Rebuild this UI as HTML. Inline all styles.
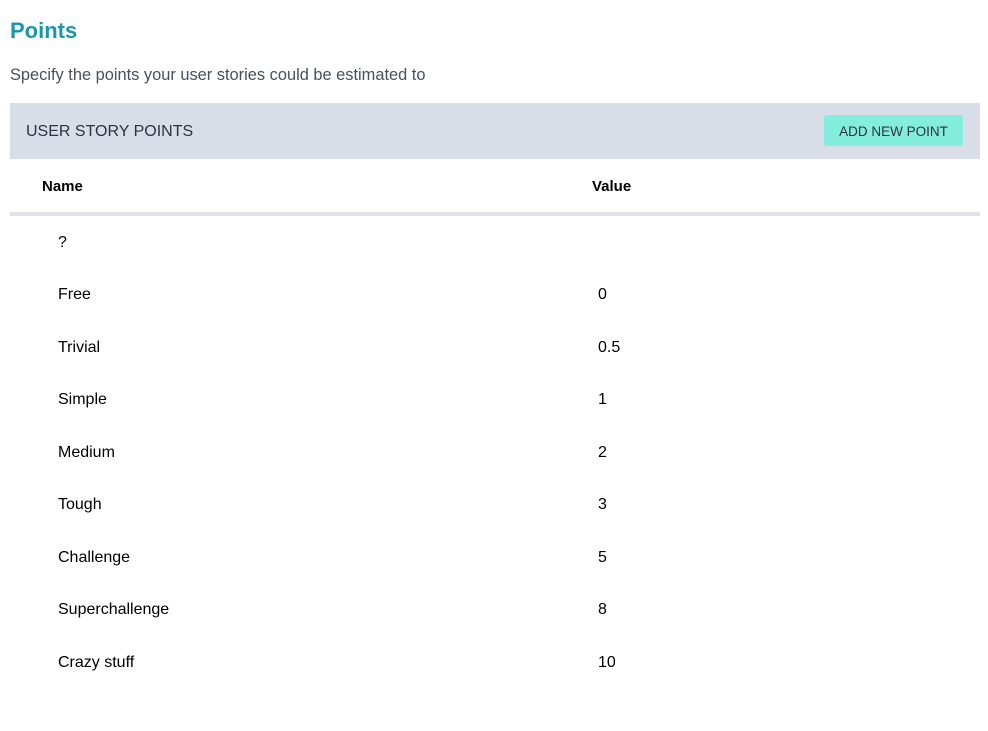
<!DOCTYPE html>
<html><head><meta charset="utf-8"><style>
body{margin:0;width:988px;height:731px;background:#fff;font-family:"Liberation Sans","DejaVu Sans",sans-serif;position:relative;overflow:hidden}
.a{position:absolute;white-space:nowrap;line-height:20px}
h1{position:absolute;left:10px;top:17px;margin:0;font-size:22px;font-weight:bold;color:#1a96ad;line-height:28px}
.sub{left:10px;top:65px;font-size:16.4px;color:#4a4f5e}
.bar{position:absolute;left:10px;top:103px;width:970px;height:56px;background:#d8dde8}
.bt{left:26px;top:122px;font-size:16px;color:#2d3140}
.btn{position:absolute;left:824px;top:115px;width:139px;height:31px;background:#83eedd;border-radius:3px;font-size:13.5px;color:#2d3140;text-align:center;line-height:34px}
.th{top:177px;font-size:15px;font-weight:bold;color:#000}
.div{position:absolute;left:10px;top:212px;width:970px;height:4px;background:#e1e2e7}
.r{font-size:16px;color:#000}
</style></head><body>
<h1>Points</h1>
<div class="a sub">Specify the points your user stories could be estimated to</div>
<div class="bar"></div>
<div class="a bt">USER STORY POINTS</div>
<div class="btn">ADD NEW POINT</div>
<div class="a th" style="left:42px">Name</div>
<div class="a th" style="left:592px">Value</div>
<div class="div"></div>
<div class="a r" style="left:58px;top:233px">?</div>
<div class="a r" style="left:58px;top:285px">Free</div><div class="a r" style="left:598px;top:285px">0</div>
<div class="a r" style="left:58px;top:338px">Trivial</div><div class="a r" style="left:598px;top:338px">0.5</div>
<div class="a r" style="left:58px;top:390px">Simple</div><div class="a r" style="left:598px;top:390px">1</div>
<div class="a r" style="left:58px;top:443px">Medium</div><div class="a r" style="left:598px;top:443px">2</div>
<div class="a r" style="left:58px;top:495px">Tough</div><div class="a r" style="left:598px;top:495px">3</div>
<div class="a r" style="left:58px;top:548px">Challenge</div><div class="a r" style="left:598px;top:548px">5</div>
<div class="a r" style="left:58px;top:600px">Superchallenge</div><div class="a r" style="left:598px;top:600px">8</div>
<div class="a r" style="left:58px;top:653px">Crazy stuff</div><div class="a r" style="left:598px;top:653px">10</div>
</body></html>
